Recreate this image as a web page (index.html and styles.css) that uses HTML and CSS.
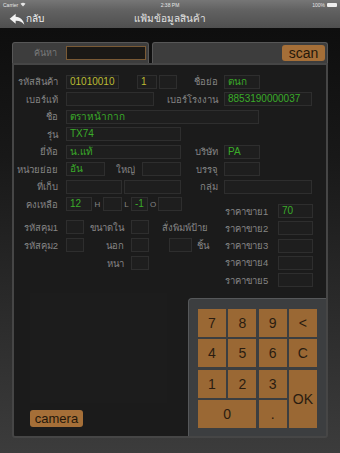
FILE: index.html
```html
<!DOCTYPE html>
<html lang="th">
<head>
    <meta charset="UTF-8">
    <meta name="viewport" content="width=device-width, initial-scale=1.0">
    <title>แฟ้มข้อมูลสินค้า</title>
    <link rel="stylesheet" href="styles.css">
</head>
<body>
    <div class="top">
        <div class="statusbar">
            <span class="carrier">Carrier
                <svg width="6" height="5" viewBox="0 0 12 10"><path d="M6 9 L1 3.5 A7.5 7.5 0 0 1 11 3.5 Z" fill="#e6e6e6"/></svg>
            </span>
            <span class="clock">2:38 PM</span>
            <span class="battery">100% <span class="batt-icon"></span></span>
        </div>
        <div class="navbar">
            <a class="back" href="#">
                <svg width="16" height="12" viewBox="0 0 24 18">
                    <path d="M10 1 L1 8.5 L10 16 L10 11.5 C15.5 11.2 19.5 13 23 17.5 C22 11 17.5 6 10 5.5 Z" fill="#f2f2f2"/>
                </svg>
                กลับ
            </a>
            <div class="title">แฟ้มข้อมูลสินค้า</div>
            <div></div>
        </div>
    </div>

    <div class="content">
        <div class="search-row">
            <div class="search-box">
                <span class="search-label">ค้นหา</span>
                <input class="search-input" type="text">
            </div>
            <div class="scan-box">
                <button class="btn scan-btn">scan</button>
            </div>
        </div>

        <div class="main">
            <div class="row">
                <div class="left">
                    <span class="lbl">รหัสสินค้า</span>
                    <span class="f w53 yellow">01010010</span>
                    <span class="f w20 ml18 yellow">1</span>
                    <span class="f w18 ml2"></span>
                </div>
                <span class="rlbl">ชื่อย่อ</span>
                <span class="f w36 green">ตนก</span>
            </div>
            <div class="row">
                <div class="left">
                    <span class="lbl">เบอร์แท้</span>
                    <span class="f w88"></span>
                </div>
                <span class="rlbl">เบอร์โรงงาน</span>
                <span class="f w88 green">8853190000037</span>
            </div>
            <div class="row">
                <span class="lbl">ชื่อ</span>
                <span class="f w193 green">ตราหน้ากาก</span>
            </div>
            <div class="row">
                <span class="lbl">รุ่น</span>
                <span class="f w115 green">TX74</span>
            </div>
            <div class="row">
                <div class="left">
                    <span class="lbl">ยี่ห้อ</span>
                    <span class="f w115 green">น.แท้</span>
                </div>
                <span class="rlbl">บริษัท</span>
                <span class="f w36 green">PA</span>
            </div>
            <div class="row">
                <div class="left">
                    <span class="lbl">หน่วยย่อย</span>
                    <span class="f w39 green">อัน</span>
                    <span class="sublbl w30">ใหญ่</span>
                    <span class="f w39 ml7"></span>
                </div>
                <span class="rlbl">บรรจุ</span>
                <span class="f w36"></span>
            </div>
            <div class="row">
                <div class="left">
                    <span class="lbl">ที่เก็บ</span>
                    <span class="f w56"></span>
                    <span class="f w57 ml2"></span>
                </div>
                <span class="rlbl">กลุ่ม</span>
                <span class="f w88"></span>
            </div>

            <div class="lower">
                <div class="lower-left">
                    <div class="row stock-row">
                        <span class="lbl">คงเหลือ</span>
                        <span class="f w26 green">12</span>
                        <span class="mini w11">H</span>
                        <span class="f w19"></span>
                        <span class="mini w9">L</span>
                        <span class="f w17 green">-1</span>
                        <span class="mini w10">O</span>
                        <span class="f w24"></span>
                    </div>
                    <div class="row row-b">
                        <span class="lbl">รหัสคุม1</span>
                        <span class="f w18"></span>
                        <span class="sublbl w40">ขนาดใน</span>
                        <span class="f w18 ml7"></span>
                        <span class="plain ml13">สั่งพิมพ์ป้าย</span>
                    </div>
                    <div class="row row-b">
                        <span class="lbl">รหัสคุม2</span>
                        <span class="f w18"></span>
                        <span class="sublbl w40">นอก</span>
                        <span class="f w18 ml7"></span>
                        <span class="f w23 ml20"></span>
                        <span class="plain ml5">ชิ้น</span>
                    </div>
                    <div class="row row-b">
                        <span class="spacer"></span>
                        <span class="sublbl w40">หนา</span>
                        <span class="f w18 ml7"></span>
                    </div>
                </div>
                <div class="prices">
                    <div class="price-row"><span class="plbl">ราคาขาย1</span><span class="f w35 green">70</span></div>
                    <div class="price-row"><span class="plbl">ราคาขาย2</span><span class="f w35"></span></div>
                    <div class="price-row"><span class="plbl">ราคาขาย3</span><span class="f w35"></span></div>
                    <div class="price-row"><span class="plbl">ราคาขาย4</span><span class="f w35"></span></div>
                    <div class="price-row"><span class="plbl">ราคาขาย5</span><span class="f w35"></span></div>
                </div>
            </div>

            <div class="bottom">
                <div class="media">
                    <div class="photo"></div>
                    <button class="btn camera-btn">camera</button>
                </div>
                <div class="keypad">
                    <div class="keys">
                        <button class="key">7</button>
                        <button class="key">8</button>
                        <button class="key">9</button>
                        <button class="key">&lt;</button>
                        <button class="key">4</button>
                        <button class="key">5</button>
                        <button class="key">6</button>
                        <button class="key">C</button>
                        <button class="key">1</button>
                        <button class="key">2</button>
                        <button class="key">3</button>
                        <button class="key key-ok">OK</button>
                        <button class="key key-zero">0</button>
                        <button class="key">.</button>
                    </div>
                </div>
            </div>
        </div>
    </div>
</body>
</html>
```

FILE: styles.css
```css
body {
    margin: 0;
    width: 340px;
    height: 453px;
    overflow: hidden;
    font-family: "Liberation Sans", "DejaVu Sans", sans-serif;
    background-color: #3a3a3a;
}
.top {
    height: 28px;
    background: linear-gradient(#767676, #626262 35%, #4f4f4f);
}
.statusbar {
    height: 9px;
    display: flex;
    justify-content: space-between;
    align-items: center;
    padding: 0 3px;
    font-size: 5px;
    color: #e6e6e6;
}
.carrier, .battery {
    width: 40px;
    display: flex;
    align-items: center;
    gap: 2px;
}
.battery {
    justify-content: flex-end;
}
.batt-icon {
    width: 10px;
    height: 4px;
    background-color: #eee;
    border-radius: 1px;
}
.navbar {
    height: 19px;
    display: grid;
    grid-template-columns: 1fr auto 1fr;
    align-items: center;
}
.back {
    display: flex;
    align-items: center;
    gap: 1px;
    padding-left: 9px;
    color: #f0f0f0;
    font-size: 10px;
    text-decoration: none;
}
.title {
    color: #e4e4e4;
    font-size: 10px;
}
.content {
    height: 425px;
    box-sizing: border-box;
    padding: 14px 12px 0;
    background: linear-gradient(#0e0e0e, #181818 30%, #2a2a2a 65%, #3c3c3c);
}
.search-row {
    display: flex;
    gap: 3px;
    height: 21px;
}
.search-box, .scan-box {
    box-sizing: border-box;
    background-color: #3d3d3d;
    border: 1px solid #575757;
    border-bottom: none;
    border-radius: 3px 3px 0 0;
    display: flex;
    align-items: center;
}
.search-box {
    width: 137px;
}
.search-label {
    width: 44px;
    text-align: right;
    color: #7a7a7a;
    font-size: 9px;
}
.search-input {
    margin-left: 9px;
    width: 80px;
    height: 14px;
    box-sizing: border-box;
    padding: 0;
    border: 1px solid #7a5a35;
    background-color: #1b1916;
}
.scan-box {
    flex: 1;
    justify-content: flex-end;
    padding-right: 2px;
}
.btn {
    border: none;
    border-radius: 3px;
    padding: 0;
    font-family: "Liberation Sans", sans-serif;
    color: #24170a;
    background-color: #a56f38;
}
.scan-btn {
    width: 43px;
    height: 16px;
    font-size: 14px;
    line-height: 16px;
}
.main {
    height: 375px;
    box-sizing: border-box;
    border: 2px solid #464646;
    border-radius: 0 0 3px 3px;
    background-color: #1b1b1b;
    padding-top: 9.5px;
    display: flex;
    flex-direction: column;
}
.row {
    display: flex;
    align-items: center;
    height: 14px;
    margin-bottom: 3.5px;
}
.left {
    width: 167px;
    display: flex;
    align-items: center;
}
.lbl, .rlbl, .sublbl {
    display: flex;
    justify-content: flex-end;
    white-space: nowrap;
    color: #858585;
    font-size: 9.5px;
}
.lbl {
    width: 44px;
    margin-right: 8px;
}
.rlbl {
    width: 37px;
    margin-right: 6px;
}
.plain, .mini, .plbl {
    white-space: nowrap;
    color: #858585;
    font-size: 9.5px;
}
.mini {
    text-align: center;
    font-size: 8px;
}
.f {
    display: block;
    height: 14px;
    box-sizing: border-box;
    border: 1px solid #2e2e2e;
    background-color: #1e1e1e;
    padding-left: 3px;
    font-size: 10px;
    line-height: 12px;
    white-space: nowrap;
    overflow: hidden;
}
.green { color: #3aac29; }
.yellow { color: #bbbb32; }

.w9 { width: 9px; }
.w10 { width: 10px; }
.w11 { width: 11px; }
.w17 { width: 17px; }
.w18 { width: 18px; }
.w19 { width: 19px; }
.w20 { width: 20px; }
.w23 { width: 23px; }
.w24 { width: 24px; }
.w26 { width: 26px; }
.w30 { width: 30px; }
.w35 { width: 35px; }
.w36 { width: 36px; }
.w39 { width: 39px; }
.w40 { width: 40px; }
.w53 { width: 53px; }
.w56 { width: 56px; }
.w57 { width: 57px; }
.w88 { width: 88px; }
.w115 { width: 115px; }
.w193 { width: 193px; }
.ml2 { margin-left: 2px; }
.ml5 { margin-left: 5px; }
.ml7 { margin-left: 7px; }
.ml13 { margin-left: 13px; }
.ml18 { margin-left: 18px; }
.ml20 { margin-left: 20px; }

.lower {
    display: flex;
}
.lower-left {
    width: 206px;
}
.stock-row {
    margin-bottom: 9px;
}
.row-b {
    margin-bottom: 4px;
}
.spacer {
    width: 70px;
}
.prices {
    padding-top: 7px;
    padding-left: 5px;
}
.price-row {
    display: flex;
    align-items: center;
    height: 14px;
    margin-bottom: 3.25px;
}
.plbl {
    width: 53px;
}
.bottom {
    margin-top: auto;
    display: flex;
    justify-content: space-between;
    align-items: flex-end;
}
.media {
    padding: 0 0 9px 16px;
}
.photo {
    width: 137px;
    height: 110px;
    margin-bottom: 7px;
    background-color: #1c1c1c;
}
.camera-btn {
    display: block;
    width: 53px;
    height: 17px;
    font-size: 13px;
    line-height: 17px;
}
.keypad {
    width: 138px;
    height: 138px;
    box-sizing: border-box;
    background-color: #3c3e40;
    border: 1px solid #56585a;
    border-right: none;
    border-bottom: none;
    border-radius: 4px 0 0 0;
    padding: 10px 0 0 9px;
}
.keys {
    display: grid;
    grid-template-columns: repeat(4, 28px);
    grid-template-rows: repeat(4, 28px);
    gap: 2.3px;
}
.key {
    border: none;
    padding: 0;
    background-color: #9a6834;
    color: #2a1c10;
    font-family: "Liberation Sans", sans-serif;
    font-size: 14px;
}
.key-ok {
    grid-column: 4;
    grid-row: 3 / span 2;
}
.key-zero {
    grid-column: 1 / span 2;
}
```
